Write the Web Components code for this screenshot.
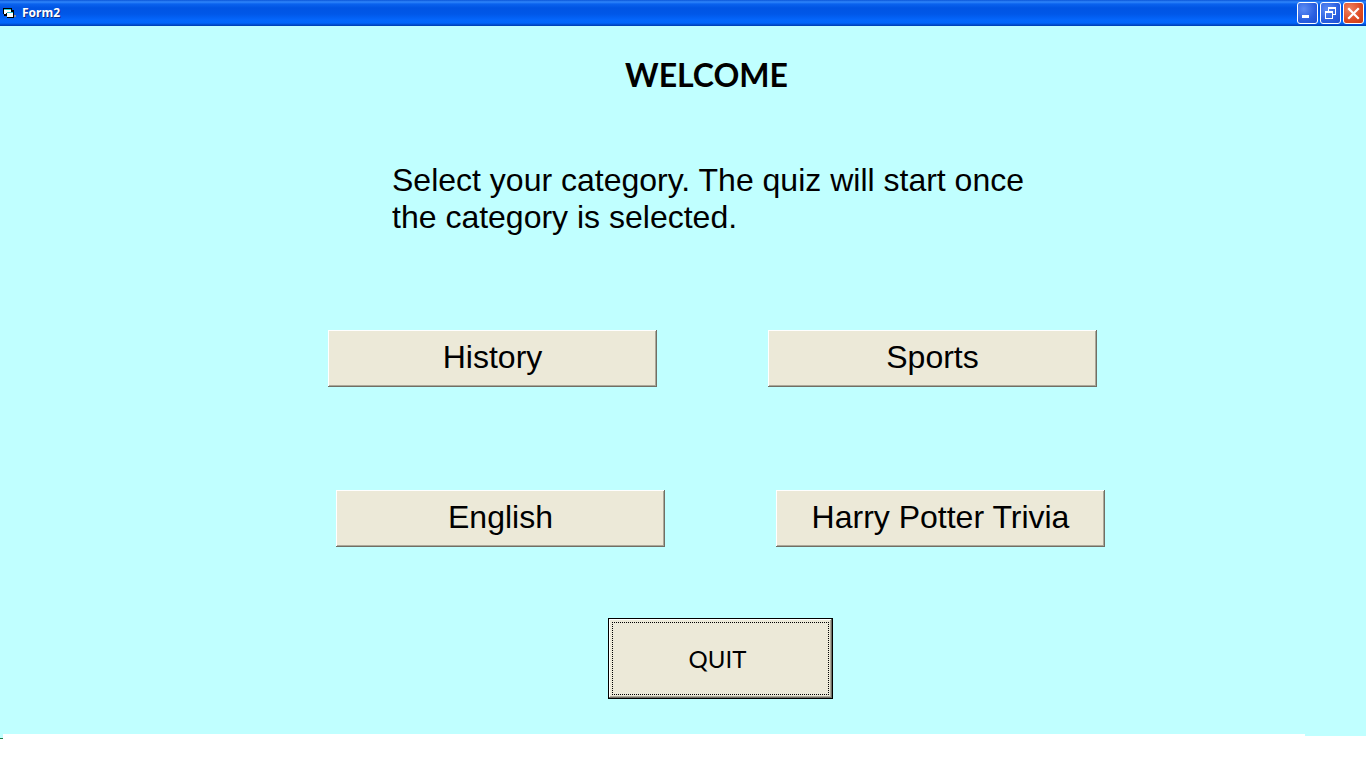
<!DOCTYPE html>
<html lang="en">
<head>
<meta charset="utf-8">
<title>Form2</title>
<style>
  html, body { margin: 0; background: #fff; }
</style>
</head>
<body>
<quiz-window></quiz-window>
<script>
class WindowButton extends HTMLElement {
  constructor() {
    super();
    const icons = {
      minimize: '<path d="M5 13h7v3H5z" fill="#fff"/>',
      restore: '<path d="M8 5h8v2H8zM8 5h1v4H8zM15 5h1v8h-1zM13 12h3v1h-3zM5 9h8v2H5zM5 9h1v8H5zM12 9h1v8h-1zM5 16h8v1H5z" fill="#fff"/>',
      close: '<path d="M6 7l9 9M15 7l-9 9" stroke="#fff" stroke-width="2.2" stroke-linecap="square"/>'
    };
    const kind = this.getAttribute('kind');
    this.attachShadow({ mode: 'open' }).innerHTML = `
      <style>
        :host { display: block; width: 21px; height: 22px; }
        button { display: block; box-sizing: border-box; width: 100%; height: 100%; margin: 0; padding: 0;
          border: 1px solid #fff; border-radius: 3px;
          background: radial-gradient(circle at 30% 30%, #5c8cf4, #2a5fe0 60%, #1d4fd0); }
        :host([kind=close]) button { background: radial-gradient(circle at 30% 30%, #ee8262, #dd4a22 60%, #c63a14); }
        svg { display: block; margin: -1px; }
      </style>
      <button aria-label="${kind}"><svg width="21" height="22" viewBox="0 0 21 22">${icons[kind]}</svg></button>`;
  }
}
customElements.define('window-button', WindowButton);

class TitleBar extends HTMLElement {
  constructor() {
    super();
    this.attachShadow({ mode: 'open' }).innerHTML = `
      <style>
        :host { display: flex; align-items: center; box-sizing: border-box; height: 26px; padding: 0 2px 0 3px;
          background: linear-gradient(#0a55d8 0, #2f86fb 2px, #0a62ee 4px, #0054e3 8px, #0057e8 14px, #0466fc 20px, #0265fa 23px, #0048c8 25px, #003dae 26px); }
        .title { flex: 1; margin-left: 5px; font: bold 12px/26px "Noto Sans", sans-serif; color: #fff; text-shadow: 1px 1px #0f2f86; }
        .controls { display: flex; gap: 2px; }
      </style>
      <svg width="14" height="12" viewBox="0 0 14 12" aria-hidden="true">
        <path d="M11 8h2v2h-2z" fill="#8b8b96"/>
        <path d="M0 1h9v2h2v8H4V9H1V7H0z" fill="#000"/>
        <path d="M1 2h7v1H1z" fill="#29c5cc"/><path d="M1 3h7v4H1z" fill="#fff"/>
        <path d="M4 5h6v1H4z" fill="#29c5cc"/><path d="M3 6h7v1H3z" fill="#111"/><path d="M4 6h6v4H4z" fill="#fff"/>
      </svg>
      <span class="title"><slot></slot></span>
      <div class="controls">
        <window-button kind="minimize"></window-button>
        <window-button kind="restore"></window-button>
        <window-button kind="close"></window-button>
      </div>`;
  }
}
customElements.define('title-bar', TitleBar);

class CommandButton extends HTMLElement {
  constructor() {
    super();
    this.attachShadow({ mode: 'open' }).innerHTML = `
      <style>
        :host { display: block; height: 57px; }
        button { display: block; box-sizing: border-box; width: 100%; height: 100%; margin: 0; padding: 0 0 2px;
          border: 0; background: #ece9d8; color: #000; font: 32px/37px "Liberation Sans", Arial, sans-serif;
          box-shadow: inset -1px -1px #716f64, inset 1px 1px #fff, inset -2px -2px #aca899; white-space: nowrap; }
        :host([default]) { height: 81px; }
        :host([default]) button { padding: 3px; border: 1px solid #000;
          font: 24px/28px Lato, sans-serif; }
        :host([default]) span { display: flex; align-items: center; justify-content: center;
          box-sizing: border-box; height: 100%; padding-right: 6px; border: 1px dotted #000; }
      </style>
      <button><span><slot></slot></span></button>`;
  }
}
customElements.define('command-button', CommandButton);

class QuizWindow extends HTMLElement {
  constructor() {
    super();
    this.attachShadow({ mode: 'open' }).innerHTML = `
      <style>
        :host { display: block; }
        main { background: #c0ffff; padding: 29px 0 35px; }
        .row { display: grid; }
        h1 { grid-column: 2; margin: 0; font: bold 32px/40px Lato, sans-serif; color: #000; white-space: nowrap; }
        p { grid-column: 2; margin: 0; font: 32px/37px "Liberation Sans", Arial, sans-serif; color: #000; }
        .heading { grid-template-columns: 625fr 741fr; }
        .intro { grid-template-columns: 392fr 660fr 314fr; margin-top: 67px; }
        .first { grid-template-columns: 328fr 329fr 111fr 329fr 269fr; margin-top: 94px; }
        .second { grid-template-columns: 336fr 329fr 111fr 329fr 261fr; margin-top: 103px; }
        .quit { grid-template-columns: 608fr 225fr 533fr; margin-top: 71px; }
        command-button { grid-column: 2; }
        command-button + command-button { grid-column: 4; }
        .edge { display: flex; justify-content: space-between; }
        .left { box-sizing: border-box; width: 3px; height: 5px; background: #c0ffff; border-bottom: 1px solid #1c7a42; }
        .right { width: 61px; height: 2px; background: #c0ffff; }
      </style>
      <title-bar>Form2</title-bar>
      <main>
        <div class="row heading"><h1>WELCOME</h1></div>
        <div class="row intro"><p>Select your category. The quiz will start once the category is selected.</p></div>
        <div class="row first"><command-button>History</command-button><command-button>Sports</command-button></div>
        <div class="row second"><command-button>English</command-button><command-button>Harry Potter Trivia</command-button></div>
        <div class="row quit"><command-button default>QUIT</command-button></div>
      </main>
      <div class="edge"><div class="left"></div><div class="right"></div></div>`;
  }
}
customElements.define('quiz-window', QuizWindow);
</script>
</body>
</html>
